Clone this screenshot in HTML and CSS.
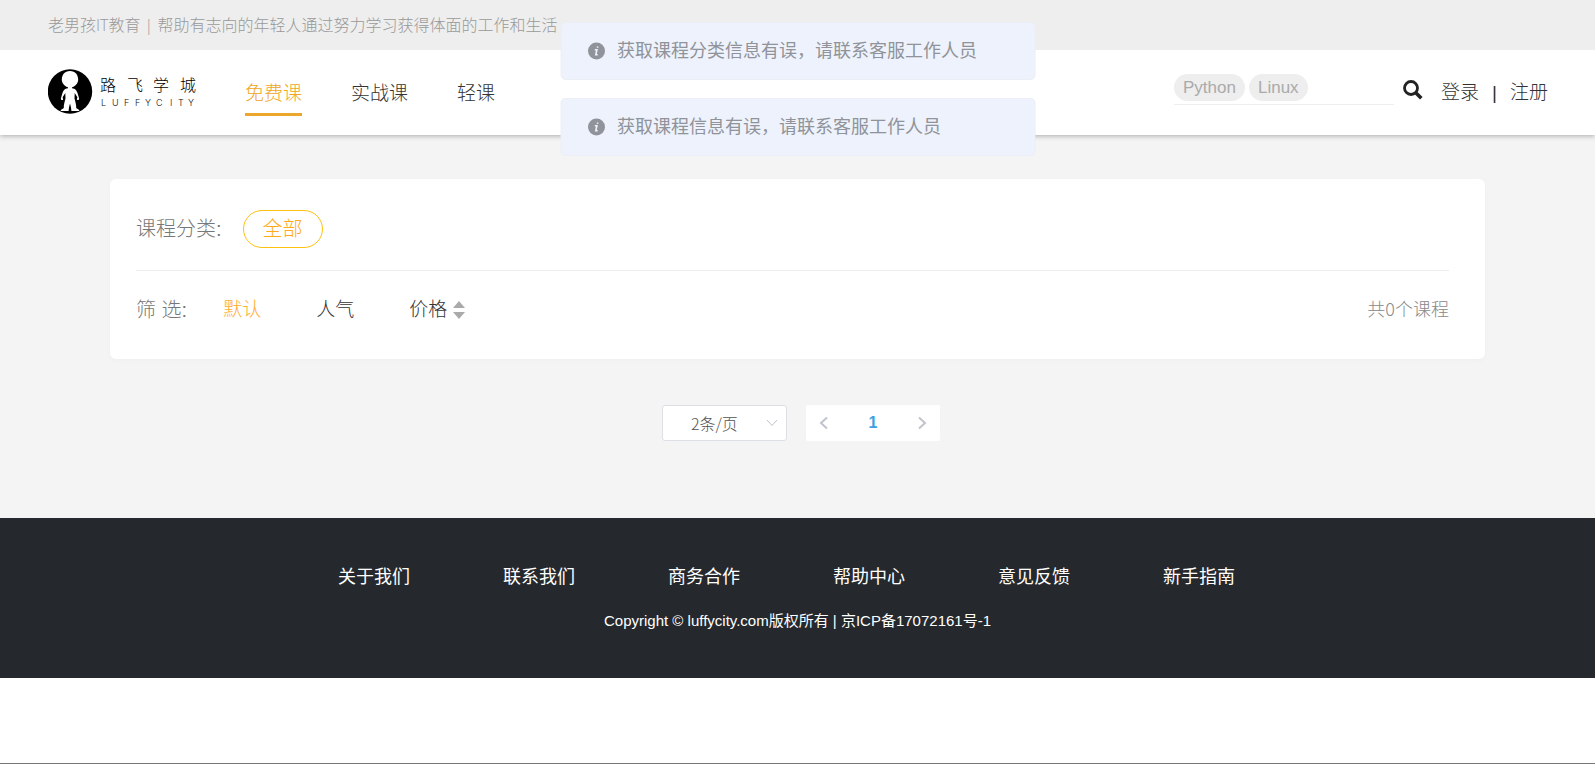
FILE: index.html
```html
<!DOCTYPE html>
<html lang="zh-CN">
<head>
<meta charset="utf-8">
<title>路飞学城</title>
<link rel="stylesheet" href="styles.css">
</head>
<body>
<header class="header">
  <p class="slogan">老男孩IT教育 | 帮助有志向的年轻人通过努力学习获得体面的工作和生活</p>
  <div class="bar">
    <a class="logo" href="#" aria-label="路飞学城">
      <svg width="148" height="46" viewBox="0 0 148 46">
        <circle cx="22" cy="22.500" r="22.200" fill="#000"/>
        <path fill="#fff" d="M22 2C16.500 2 14 6 13.800 10.500C13.800 14.500 17 17.500 20 18.300L20 19.300C16.500 19.600 15.500 21.500 14.500 24L13 29C12.400 30.500 14 32 15.200 30.500L14.600 28.300L17.300 24L17.500 29.500C16.600 33 15.600 36 15.800 39C14.500 40 12.800 40.500 12.600 42L20.600 42L21 38.500L22 34.500L23 38.500L23.400 42L31.400 42C31.200 40.500 29.500 40 28.200 39C28.400 36 27.400 33 26.500 29.500L26.700 24L29.400 28.300L28.800 30.500C30 32 31.600 30.500 31 29L29.500 24C28.500 21.500 27.500 19.600 24 19.300L24 18.300C27 17.500 30.200 14.500 30.200 10.500C30 6 27.500 2 22 2Z"/>
        <text class="logo-name" x="52 79 105 132" y="22">路飞学城</text>
        <text class="logo-latin" x="53 64 76 87 97 108 122 130 140" y="37">LUFFYCITY</text>
      </svg>
    </a>
    <nav class="nav">
      <a class="nav-link active" href="#">免费课</a>
      <a class="nav-link" href="#">实战课</a>
      <a class="nav-link" href="#">轻课</a>
    </nav>
    <form class="search">
      <div class="field">
        <a class="tag" href="#">Python</a>
        <a class="tag" href="#">Linux</a>
        <input class="query" type="text" aria-label="搜索课程">
      </div>
      <button class="search-btn" type="button" aria-label="搜索">
        <svg width="20" height="20" viewBox="0 0 20 20" fill="none" stroke="#222"><circle cx="8" cy="8" r="6.500" stroke-width="2.800"/><path d="M12.800 12.800L18.300 18.300" stroke-width="3.600"/></svg>
      </button>
    </form>
    <div class="account"><a href="#">登录</a><span>|</span><a href="#">注册</a></div>
  </div>
</header>

<main class="main">
  <section class="card">
    <div class="row category">
      <span class="label">课程分类:</span>
      <button class="pill" type="button">全部</button>
    </div>
    <div class="row filter">
      <span class="label">筛 选:</span>
      <div class="sorts">
        <button class="sort on" type="button">默认</button>
        <button class="sort" type="button">人气</button>
        <button class="sort" type="button">价格
          <svg width="12" height="18" viewBox="0 0 12 18" fill="#aaa"><path d="M0 7L6 0L12 7ZM0 11L6 18L12 11Z"/></svg>
        </button>
      </div>
      <span class="total">共0个课程</span>
    </div>
  </section>
  <div class="pagination">
    <div class="size">
      <select class="size-select" aria-label="每页条数"><option>2条/页</option></select>
      <svg class="size-arrow" width="12" height="8" viewBox="0 0 12 8" fill="none" stroke="#c0c4cc"><path d="M1 1L6 6.500L11 1"/></svg>
    </div>
    <div class="pager">
      <button type="button" aria-label="上一页"><svg width="10" height="14" viewBox="0 0 10 14" fill="none" stroke="#c0c4cc" stroke-width="2"><path d="M8 1.500L2 7L8 12.500"/></svg></button>
      <button class="current" type="button">1</button>
      <button type="button" aria-label="下一页"><svg width="10" height="14" viewBox="0 0 10 14" fill="none" stroke="#c0c4cc" stroke-width="2"><path d="M2 1.500L8 7L2 12.500"/></svg></button>
    </div>
  </div>
</main>

<footer class="footer">
  <ul class="links">
    <li><a href="#">关于我们</a></li>
    <li><a href="#">联系我们</a></li>
    <li><a href="#">商务合作</a></li>
    <li><a href="#">帮助中心</a></li>
    <li><a href="#">意见反馈</a></li>
    <li><a href="#">新手指南</a></li>
  </ul>
  <p class="copyright">Copyright © luffycity.com版权所有 | 京ICP备17072161号-1</p>
</footer>

<div class="messages">
  <div class="message" role="alert">
    <svg width="18" height="18" viewBox="0 0 18 18"><circle cx="9" cy="9" r="8.500" fill="#909399"/><path d="M10.200 4.500L9.900 5.800M7.300 7.700H9.400L8.300 12.800H10.200" fill="none" stroke="#edf2fc" stroke-width="1.600"/></svg>
    <p>获取课程分类信息有误，请联系客服工作人员</p>
  </div>
  <div class="message" role="alert">
    <svg width="18" height="18" viewBox="0 0 18 18"><circle cx="9" cy="9" r="8.500" fill="#909399"/><path d="M10.200 4.500L9.900 5.800M7.300 7.700H9.400L8.300 12.800H10.200" fill="none" stroke="#edf2fc" stroke-width="1.600"/></svg>
    <p>获取课程信息有误，请联系客服工作人员</p>
  </div>
</div>
</body>
</html>
```
FILE: styles.css
```css
* { box-sizing: border-box; margin: 0; padding: 0; }
body {
  min-height: 100vh;
  background: #fff;
  border-bottom: 1px solid #777;
  color: #333;
  font-family: "Liberation Sans", "Noto Sans CJK SC", sans-serif;
  font-weight: 300;
}
a { color: inherit; text-decoration: none; }
button, input, select { font: inherit; color: inherit; border: 0; background: none; outline: 0; }
button { cursor: pointer; }
svg { display: block; }

.header { position: relative; background: #fff; box-shadow: 0 1px 5px #aaa; }
.slogan {
  padding: 0 48px;
  background: #eee;
  color: #999;
  font-family: "Open Sans", "Noto Sans CJK SC", sans-serif;
  font-size: 16px;
  line-height: 50px;
}
.bar { display: flex; align-items: center; height: 85px; padding: 0 47px 0 48px; }
.logo { padding-bottom: 1px; }
.logo-name { font-family: "Noto Sans CJK SC", sans-serif; font-size: 16px; font-weight: 300; fill: #000; }
.logo-latin { font-family: Inter, "Open Sans", sans-serif; font-size: 9px; fill: #111; }
.nav { display: flex; gap: 49px; margin-left: 49px; }
.nav-link { padding: 10px 0 5px; border-bottom: 3px solid transparent; font-size: 19px; line-height: 28px; }
.nav-link.active { color: #f0a61e; border-color: #eaa72c; }
.search { display: flex; align-items: center; gap: 9px; margin-left: auto; padding-bottom: 6px; }
.field { display: flex; gap: 4px; width: 220px; padding-bottom: 3px; border-bottom: 1px solid #eee; }
.tag { padding: 0 9px; border-radius: 14px; background: #eee; color: #aaa; font-size: 17px; line-height: 27px; }
.query { flex: 1; min-width: 0; font-size: 16px; }
.account { display: flex; gap: 13px; margin-left: 18px; font-size: 19px; line-height: 28px; }

.main { padding: 44px 110px 77px; background: #f4f4f4; }
.card { padding: 31px 36px 33px 26px; border-radius: 6px; background: #fff; box-shadow: 0 2px 4px #f0f0f0; }
.row { display: flex; align-items: center; }
.label { color: #777; font-size: 20px; line-height: 28px; }
.category { gap: 21px; padding-bottom: 22px; border-bottom: 1px solid #eee; }
.pill { height: 38px; padding: 0 19px; border: 1px solid #ffc210; border-radius: 19px; color: #ffab19; font-size: 20px; line-height: 36px; }
.filter { gap: 36px; padding-top: 23px; }
.sorts { display: flex; gap: 55px; }
.sort { display: flex; align-items: center; gap: 6px; font-size: 19px; line-height: 32px; }
.sort.on { color: #ffab2e; }
.total { margin-left: auto; padding-bottom: 4px; color: #888; font-family: "Noto Sans CJK SC", sans-serif; font-size: 18px; line-height: 28px; }

.pagination { display: flex; justify-content: center; align-items: center; gap: 19px; margin-top: 46px; padding-left: 7px; }
.size { position: relative; }
.size-select { width: 125px; height: 36px; padding-left: 28px; border: 1px solid #dcdfe6; border-radius: 3px; background: #fff; color: #505256; font-family: "Noto Sans CJK SC", sans-serif; font-size: 16px; appearance: none; }
.size-arrow { position: absolute; top: 14px; right: 9px; pointer-events: none; }
.pager { display: flex; justify-content: space-between; width: 134px; height: 36px; border-radius: 2px; background: #fff; }
.pager button { display: flex; justify-content: center; align-items: center; width: 36px; }
.pager .current { color: #409fe0; font-size: 16px; font-weight: 700; }

.footer { padding: 45px 0; background: #25292e; color: #fff; text-align: center; font-weight: 400; }
.links { display: flex; justify-content: center; gap: 93px; padding-right: 22px; list-style: none; font-size: 18px; line-height: 28px; }
.copyright { margin-top: 18px; font-size: 15px; line-height: 24px; }

.messages { position: absolute; top: 22px; left: 50%; display: flex; flex-direction: column; gap: 18px; width: 475px; transform: translateX(-50%); }
.message { display: flex; align-items: center; gap: 12px; height: 58px; padding: 0 26px; border: 1px solid #ebeef5; border-radius: 5px; background: #edf2fc; color: #909399; font-size: 18px; line-height: 26px; font-weight: 400; }
```
